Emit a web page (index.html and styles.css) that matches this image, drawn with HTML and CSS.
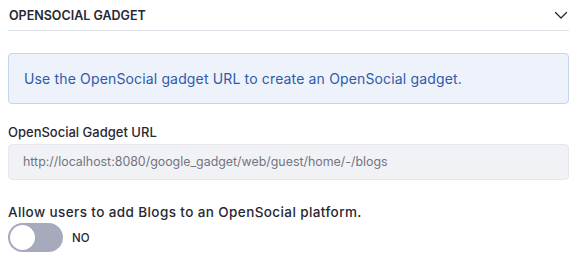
FILE: index.html
```html
<!DOCTYPE html>
<html>
<head>
<meta charset="utf-8">
<link rel="stylesheet" href="styles.css">
</head>
<body>
<div class="panel">
  <div class="panel-header">
    <span class="panel-title">OPENSOCIAL GADGET</span>
    <svg class="chevron" width="14" height="10" viewBox="0 0 14 10"><path d="M1.5 2.5 L7 8 L12.5 2.5" fill="none" stroke="#272833" stroke-width="1.3" stroke-linecap="round" stroke-linejoin="round"/></svg>
  </div>
  <div class="panel-body">
    <div class="alert">Use the OpenSocial gadget URL to create an OpenSocial gadget.</div>
    <div class="form-group">
      <label class="label">OpenSocial Gadget URL</label>
      <div class="input">http://localhost:8080/google_gadget/web/guest/home/-/blogs</div>
    </div>
    <div class="form-group toggle-group">
      <label class="label toggle-label">Allow users to add Blogs to an OpenSocial platform.</label>
      <div class="toggle-row">
        <span class="toggle"><span class="knob"></span></span>
        <span class="toggle-text">NO</span>
      </div>
    </div>
  </div>
</div>
</body>
</html>
```
FILE: styles.css
```css
html, body {
  margin: 0;
  padding: 0;
  background: #ffffff;
}
body {
  font-family: Inter, "Noto Sans", sans-serif;
  color: #272833;
  font-size: 14px;
}
.panel {
  padding: 0 9px 0 8px;
}
.panel-header {
  display: flex;
  align-items: center;
  justify-content: space-between;
  height: 30px;
  border-bottom: 1px solid #e1e1ea;
}
.panel-title {
  font-size: 12.5px;
  font-weight: 600;
  padding-left: 1px;
  margin-top: 1px;
}
.chevron {
  margin-right: 1px;
  margin-top: -1px;
}
.panel-body {
  padding-top: 22px;
}
.alert {
  background: #eef2fa;
  border: 1px solid #c6d4ef;
  border-radius: 4px;
  color: #2e5aac;
  padding: 15px 15px;
  line-height: 19px;
  font-size: 14px;
  letter-spacing: 0.15px;
}
.form-group {
  margin-top: 18px;
}
.label {
  display: block;
  font-size: 13px;
  font-weight: 500;
  line-height: 20px;
  margin-bottom: 2px;
}
.input {
  background: #f1f2f5;
  border: 1px solid #e7e7ed;
  border-radius: 4px;
  height: 34px;
  line-height: 34px;
  padding: 0 14px;
  color: #737483;
  font-size: 12.4px;
}
.toggle-group {
  margin-top: 22px;
}
.toggle-label {
  font-size: 13.5px;
  letter-spacing: 0.4px;
  margin-bottom: 1px;
}
.toggle-row {
  display: flex;
  align-items: center;
}
.toggle {
  width: 55px;
  height: 29px;
  border-radius: 15px;
  background: #a7a9bc;
  display: flex;
  align-items: center;
  padding-left: 2px;
  box-sizing: border-box;
}
.knob {
  width: 25px;
  height: 25px;
  border-radius: 50%;
  background: #ffffff;
}
.toggle-text {
  margin-left: 9px;
  font-size: 11.5px;
  font-weight: 500;
}
```
